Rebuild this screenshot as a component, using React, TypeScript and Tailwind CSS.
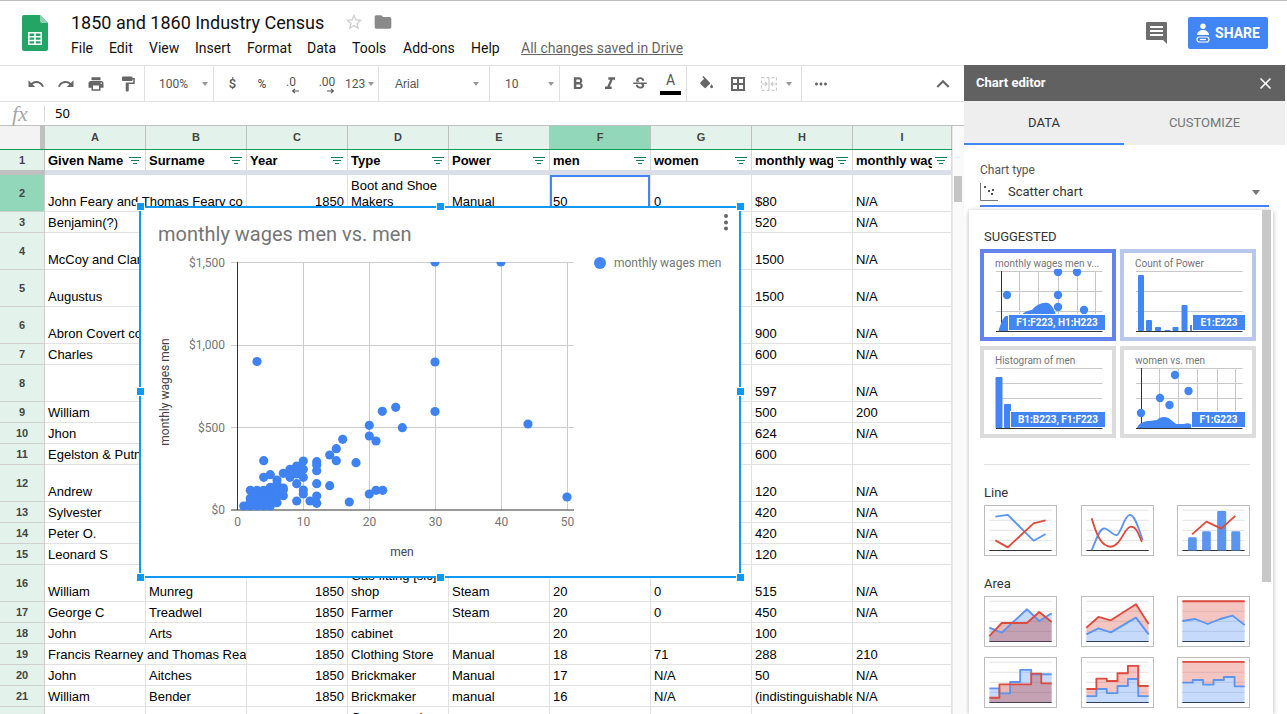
import type { ReactNode } from 'react'
import {
  MdClose,
  MdExpandLess,
  MdFolder,
  MdFormatBold,
  MdFormatItalic,
  MdFormatPaint,
  MdMoreHoriz,
  MdPrint,
  MdRedo,
  MdStarBorder,
  MdStrikethroughS,
  MdUndo,
} from 'react-icons/md'

interface Row {
  n: number
  h: number
  cells: string[]
  wide?: boolean
}

const COLUMNS = ['A', 'B', 'C', 'D', 'E', 'F', 'G', 'H', 'I']
const HEADERS = ['Given Name', 'Surname', 'Year', 'Type', 'Power', 'men', 'women', 'monthly wages men', 'monthly wages women']

const side = (n: number, h: number, name: string, wages: string, women: string): Row => ({
  n,
  h,
  cells: [name, '', '', '', '', '', '', wages, women],
})

const ROWS: Row[] = [
  { n: 2, h: 37, wide: true, cells: ['John Feary and Thomas Feary co', '', '1850', 'Boot and Shoe Makers', 'Manual', '50', '0', '$80', 'N/A'] },
  side(3, 21, 'Benjamin(?)', '520', 'N/A'),
  side(4, 37, 'McCoy and Clark', '1500', 'N/A'),
  side(5, 37, 'Augustus', '1500', 'N/A'),
  side(6, 37, 'Abron Covert co', '900', 'N/A'),
  side(7, 21, 'Charles', '600', 'N/A'),
  side(8, 37, '', '597', 'N/A'),
  side(9, 21, 'William', '500', '200'),
  side(10, 21, 'Jhon', '624', 'N/A'),
  side(11, 21, 'Egelston & Putnam', '600', ''),
  side(12, 37, 'Andrew', '120', 'N/A'),
  side(13, 21, 'Sylvester', '420', 'N/A'),
  side(14, 21, 'Peter O.', '420', 'N/A'),
  side(15, 21, 'Leonard S', '120', 'N/A'),
  { n: 16, h: 37, cells: ['William', 'Munreg', '1850', 'Gas fitting [sic] shop', 'Steam', '20', '0', '515', 'N/A'] },
  { n: 17, h: 21, cells: ['George C', 'Treadwel', '1850', 'Farmer', 'Steam', '20', '0', '450', 'N/A'] },
  { n: 18, h: 21, cells: ['John', 'Arts', '1850', 'cabinet', '', '20', '', '100', ''] },
  { n: 19, h: 21, wide: true, cells: ['Francis Rearney and Thomas Rea', '', '1850', 'Clothing Store', 'Manual', '18', '71', '288', '210'] },
  { n: 20, h: 21, cells: ['John', 'Aitches', '1850', 'Brickmaker', 'Manual', '17', 'N/A', '50', 'N/A'] },
  { n: 21, h: 21, cells: ['William', 'Bender', '1850', 'Brickmaker', 'manual', '16', 'N/A', '(indistinguishable', 'N/A'] },
  { n: 22, h: 37, cells: ['', '', '', 'Grocery and store', '', '', '', '', ''] },
]

const MENU = [
  { label: 'File', w: 'w-[38px]' },
  { label: 'Edit', w: 'w-[40px]' },
  { label: 'View', w: 'w-[46px]' },
  { label: 'Insert', w: 'w-[52px]' },
  { label: 'Format', w: 'w-[60px]' },
  { label: 'Data', w: 'w-[45px]' },
  { label: 'Tools', w: 'w-[51px]' },
  { label: 'Add-ons', w: 'w-[68px]' },
  { label: 'Help', w: 'w-[50px]' },
]

// scatter points, in coordinates read off the page
const SCATTER = [
  [257, 361.5], [435, 262], [501, 262], [435, 362], [435, 411.5], [528, 424], [567, 497],
  [263.7, 460.7], [263.7, 477.3], [270.3, 474.7], [277, 480], [283.3, 473.3], [290, 469.3], [296.7, 466], [303.3, 461],
  [303.3, 469.3], [296.7, 474], [290, 477.3], [303.3, 477.3], [296.7, 483.7], [283.3, 488], [283.3, 495.7], [303.3, 490],
  [303.3, 494], [296.7, 501], [310, 501], [316.7, 496], [316.7, 503.3], [316.7, 483.7], [316.7, 470.7], [316.7, 461.7],
  [316.7, 465], [329.7, 485.7], [329.7, 455], [336.3, 448.7], [336.3, 460.7], [342.7, 439.3], [356, 462.7], [349.3, 502],
  [369.3, 494], [376, 490.3], [382.7, 490.3], [369.3, 436], [376, 441], [369.3, 425.3], [382.3, 411.3], [395.7, 407.3],
  [402.3, 427.7], [250.3, 490.3], [257, 490.3], [263.7, 490.3], [270.3, 487.3], [277, 484], [250.3, 498.3], [257, 496.7],
  [263.7, 495], [270.3, 493.3], [277, 490], [243.7, 506], [250.3, 506], [257, 506], [263.7, 506], [270.3, 506], [277, 502.7],
  [250.3, 501.7], [257, 501.7], [263.7, 501.7], [270.3, 501.7], [257, 493.3], [263.7, 498.3], [270.3, 498.3], [277, 496.7],
  [277, 493.3], [283.3, 490],
]

const filterIcon = (
  <svg width="12" height="8" viewBox="0 0 12 8" className="shrink-0 text-[#0f7f55]">
    <path d="M0 .5h12M2 3.5h8M4 6.5h4" stroke="currentColor" strokeWidth="1" fill="none" />
  </svg>
)

function SheetsLogo() {
  return (
    <svg width="26" height="36" viewBox="0 0 26 36">
      <path d="M2 0h16l8 8v26a2 2 0 0 1-2 2H2a2 2 0 0 1-2-2V2a2 2 0 0 1 2-2z" fill="#23a566" />
      <path d="M18 0l8 8h-6a2 2 0 0 1-2-2z" fill="#8ed1b1" />
      <path
        d="M6 17h14v13H6zm1.500 1.500V21h4.700v-2.500zm6.300 0V21h4.700v-2.500zm-6.300 3.900v2.400h4.700v-2.400zm6.300 0v2.400h4.700v-2.400zm-6.300 3.800v2.300h4.700v-2.300zm6.300 0v2.300h4.700v-2.300z"
        fill="#fff"
        fillRule="evenodd"
      />
    </svg>
  )
}

function Header() {
  return (
    <header className="flex h-[64px] shrink-0 font-[Roboto,sans-serif]">
      <div className="ml-[22px] mt-[14px] w-[49px] shrink-0">
        <SheetsLogo />
      </div>
      <div className="flex-1">
        <div className="mt-[8px] flex h-[26px] items-center">
          <span className="text-[18px] text-[#111]">1850 and 1860 Industry Census</span>
          <MdStarBorder className="ml-[20px] text-[20px] text-[#d0d0d0]" />
          <MdFolder className="ml-[9px] text-[20px] text-[#8a8a8a]" />
        </div>
        <div className="mt-[3px] flex h-[20px] items-center text-[14px] text-[#111]">
          {MENU.map((item) => (
            <span key={item.label} className={item.w}>
              {item.label}
            </span>
          ))}
          <span className="text-[#666] underline">All changes saved in Drive</span>
        </div>
      </div>
      <div className="mt-[16px] flex h-[32px] items-center">
        <svg width="22" height="22" viewBox="0 0 22 22">
          <path d="M1 0h19a1 1 0 0 1 1 1v21l-4-4H1a1 1 0 0 1-1-1V1a1 1 0 0 1 1-1z" fill="#6e6e6e" />
          <path d="M4 5h13M4 9h13M4 13h13" stroke="#fff" strokeWidth="2" />
        </svg>
        <button className="ml-[20px] mr-[19px] flex h-[32px] w-[80px] items-center justify-center gap-[5px] rounded-[2px] bg-[#4285f4] text-[14px] font-bold text-white">
          <svg width="14" height="20" viewBox="0 0 14 20">
            <circle cx="7" cy="3.200" r="2.700" fill="#fff" />
            <path d="M1 12c0-3 3-5 6-5s6 2 6 5z" fill="#fff" />
            <rect x="1" y="14" width="12" height="5" rx="2.500" fill="none" stroke="#fff" strokeWidth="1.200" />
            <path d="M4 16.500h6" stroke="#fff" strokeWidth="1.200" />
          </svg>
          SHARE
        </button>
      </div>
    </header>
  )
}

function Caret() {
  return <span className="h-0 w-0 border-x-[3px] border-t-[4px] border-x-transparent border-t-[#999]" />
}

function ToolIcon({ w, children }: { w: string; children: ReactNode }) {
  return <div className={`flex h-full shrink-0 items-center justify-center ${w}`}>{children}</div>
}

function Sep() {
  return <div className="h-full w-px shrink-0 bg-[#e0e0e0]" />
}

function TinyArrow({ flip }: { flip?: boolean }) {
  return (
    <svg width="8" height="6" viewBox="0 0 8 6" className={flip ? 'ml-[8px] rotate-180' : 'ml-[8px]'}>
      <path d="M8 3H2M4 .8L1.600 3 4 5.200" stroke="#555" strokeWidth="1.100" fill="none" />
    </svg>
  )
}

function Toolbar() {
  const icon = 'text-[18px] text-[#666]'
  return (
    <div className="flex h-[37px] shrink-0 border-y border-[#e0e0e0] pl-[21px] font-[Roboto,sans-serif] text-[12px] text-[#555]">
      <ToolIcon w="w-[30px]"><MdUndo className={icon} /></ToolIcon>
      <ToolIcon w="w-[30px]"><MdRedo className={icon} /></ToolIcon>
      <ToolIcon w="w-[30px]"><MdPrint className={icon} /></ToolIcon>
      <ToolIcon w="w-[33px]"><MdFormatPaint className={icon} /></ToolIcon>
      <Sep />
      <div className="flex w-[68px] shrink-0 items-center pl-[14px]">
        <span className="w-[43px]">100%</span>
        <Caret />
      </div>
      <Sep />
      <ToolIcon w="w-[37px]"><span className="text-[13px] font-medium">$</span></ToolIcon>
      <ToolIcon w="w-[22px]"><span className="font-medium">%</span></ToolIcon>
      <ToolIcon w="w-[36px]">
        <span className="flex flex-col items-center pt-[3px] leading-[11px]">
          .0
          <TinyArrow />
        </span>
      </ToolIcon>
      <ToolIcon w="w-[36px]">
        <span className="flex flex-col items-center pt-[3px] leading-[11px]">
          .00
          <TinyArrow flip />
        </span>
      </ToolIcon>
      <div className="flex w-[33px] shrink-0 items-center gap-[3px]">
        <span>123</span>
        <Caret />
      </div>
      <Sep />
      <div className="flex w-[110px] shrink-0 items-center pl-[16px] font-['Liberation_Sans',sans-serif]">
        <span className="w-[78px]">Arial</span>
        <Caret />
      </div>
      <Sep />
      <div className="flex w-[69px] shrink-0 items-center pl-[15px]">
        <span className="w-[43px]">10</span>
        <Caret />
      </div>
      <Sep />
      <ToolIcon w="w-[35px]"><MdFormatBold className="text-[20px] text-[#666]" /></ToolIcon>
      <ToolIcon w="w-[29px]"><MdFormatItalic className="text-[20px] text-[#666]" /></ToolIcon>
      <ToolIcon w="w-[31px]"><MdStrikethroughS className="text-[18px] text-[#666]" /></ToolIcon>
      <ToolIcon w="w-[31px]">
        <span className="flex flex-col items-center text-[14px] leading-[16px]">
          A
          <span className="mt-[3px] h-[4px] w-[21px] bg-black" />
        </span>
      </ToolIcon>
      <Sep />
      <ToolIcon w="w-[37px]">
        <svg width="15" height="15" viewBox="0 0 21 21">
          <path d="M16.560 8.940L7.620 0 6.210 1.410l2.380 2.380-5.150 5.150c-.59.59-.59 1.540 0 2.120l5.500 5.500c.29.29.68.44 1.060.44s.77-.15 1.060-.44l5.500-5.500c.59-.58.59-1.530 0-2.120z" fill="#666" />
          <path d="M19 11.500s-2 2.170-2 3.500c0 1.100.9 2 2 2s2-.9 2-2c0-1.330-2-3.500-2-3.500z" fill="#666" />
        </svg>
      </ToolIcon>
      <ToolIcon w="w-[27px]">
        <svg width="14" height="14" viewBox="0 0 14 14">
          <path d="M0 0h14v14H0zm2 2v4h4V2zm6 0v4h4V2zM2 8v4h4V8zm6 0v4h4V8z" fill="#666" fillRule="evenodd" />
        </svg>
      </ToolIcon>
      <ToolIcon w="w-[35px]">
        <svg width="16" height="14" viewBox="0 0 16 14">
          <path d="M.5.500h15v13H.5z" fill="none" stroke="#ccc" strokeWidth="1.300" strokeDasharray="3 2" />
          <path d="M1 7h5M4 5l2 2-2 2M15 7h-5M12 5l-2 2 2 2M8 1v12" stroke="#ccc" strokeWidth="1.200" fill="none" />
        </svg>
      </ToolIcon>
      <div className="flex w-[15px] shrink-0 items-center"><Caret /></div>
      <Sep />
      <ToolIcon w="w-[38px]"><MdMoreHoriz className="text-[18px] text-[#666]" /></ToolIcon>
      <div className="flex-1" />
      <ToolIcon w="w-[42px]"><MdExpandLess className="text-[26px] text-[#666]" /></ToolIcon>
    </div>
  )
}

function FormulaBar() {
  return (
    <div className="flex h-[24px] shrink-0 items-center border-b border-[#c0c0c0] bg-white text-[13px] text-black">
      <span className="w-[44px] pl-[12px] font-['Liberation_Serif',serif] text-[22px] italic leading-none text-[#a8a8a8]">fx</span>
      <span className="h-[16px] w-px bg-[#d8d8d8]" />
      <span className="pl-[10px]">50</span>
    </div>
  )
}

function Cell({ text, col, row }: { text: string; col: number; row: Row }) {
  const selected = row.n === 2 && col === 5
  const wrap = col === 3
  const right = col === 2
  const wide = row.wide && col === 0
  const last = col === 8
  return (
    <div
      className={`flex shrink-0 items-end overflow-hidden border-b border-r border-[#e2e2e2] px-[3px] pb-[1px] leading-[16px] ${
        wide ? 'w-[202px]' : last ? 'w-[99px]' : 'w-[101px]'
      } ${wrap ? '' : 'whitespace-nowrap'} ${right ? 'justify-end' : ''} ${
        selected ? 'ring-2 ring-inset ring-[#4285f4]' : ''
      }`}
    >
      {text}
    </div>
  )
}

function SheetGrid() {
  return (
    <div className="relative flex flex-1 overflow-hidden font-['Liberation_Sans',Arial,sans-serif] text-[13px] text-black">
      <div className="w-[952px] shrink-0">
        <div className="flex h-[24px] border-b border-[#0f9d58]">
          <div className="w-[45px] shrink-0 border-r-[5px] border-[#c0c0c0] bg-[#f3f3f3]" />
          {COLUMNS.map((c, i) => (
            <div
              key={c}
              className={`flex shrink-0 items-center justify-center border-r border-[#c0c0c0] text-[11px] font-bold text-[#444] ${
                i === 8 ? 'w-[99px]' : 'w-[101px]'
              } ${c === 'F' ? 'bg-[#93d7bb]' : 'bg-[#e3f3eb]'}`}
            >
              {c}
            </div>
          ))}
        </div>
        <div className="flex h-[20px]">
          <div className="flex w-[45px] shrink-0 items-center justify-center border-r border-[#c0c0c0] bg-[#e3f3eb] text-[11px] font-bold text-[#444]">
            1
          </div>
          {HEADERS.map((h, i) => (
            <div
              key={h}
              className={`flex shrink-0 items-center gap-[3px] border-r border-[#d8d8d8] pl-[3px] pr-[4px] pt-px font-bold ${
                i === 8 ? 'w-[99px]' : 'w-[101px]'
              }`}
            >
              <span className="min-w-0 flex-1 overflow-hidden whitespace-nowrap">{h}</span>
              {filterIcon}
            </div>
          ))}
        </div>
        <div className="flex h-[5px]">
          <div className="w-[45px] bg-[#c0c0c0]" />
          <div className="flex-1 bg-[#d9dee8]" />
        </div>
        {ROWS.map((row) => (
          <div key={row.n} className={`flex ${row.h === 37 ? 'h-[37px]' : 'h-[21px]'}`}>
            <div
              className={`flex w-[45px] shrink-0 items-center justify-center border-b border-r border-[#d0d0d0] text-[11px] font-bold text-[#444] ${
                row.n === 2 ? 'bg-[#93d7bb]' : 'bg-[#e3f3eb]'
              }`}
            >
              {row.n}
            </div>
            {row.cells.map((text, i) =>
              row.wide && i === 1 ? null : <Cell key={i} text={text} col={i} row={row} />
            )}
          </div>
        ))}
      </div>
      <div className="w-[12px] shrink-0 border-l border-[#e8e8e8] bg-[#fafafa] pl-[1px] pt-[50px]">
        <div className="h-[26px] w-[8px] bg-[#c4c4c4]" />
      </div>
      <ChartOverlay />
    </div>
  )
}

function Handle({ pos }: { pos: string }) {
  return <div className={`absolute h-[9px] w-[9px] border border-white bg-[#0f99f5] ${pos}`} />
}

function ChartOverlay() {
  const gridX = [303.5, 369.5, 435.5, 501.5, 567.5]
  const gridY = [262.5, 345.5, 427.5]
  const yLabels: [string, number][] = [['$1,500', 266.5], ['$1,000', 349], ['$500', 431.5], ['$0', 514]]
  const xLabels: [string, number][] = [['0', 237.5], ['10', 303.5], ['20', 369.5], ['30', 435.5], ['40', 501.5], ['50', 567.5]]
  return (
    <div className="absolute left-[139px] top-[80px] h-[372px] w-[602px] border-2 border-[#0f99f5] bg-white font-[Roboto,sans-serif]">
      <svg width="598" height="368" viewBox="141 208 598 368" className="block">
        <defs>
          <clipPath id="plot">
            <rect x="230" y="262" width="345" height="249" />
          </clipPath>
        </defs>
        <text x="158" y="241" fontSize="20" fill="#757575">monthly wages men vs. men</text>
        {gridY.map((y) => (
          <line key={y} x1="231" x2="574" y1={y} y2={y} stroke="#cccccc" />
        ))}
        {gridX.map((x) => (
          <line key={x} x1={x} x2={x} y1="262" y2="510" stroke="#cccccc" />
        ))}
        <line x1="237.500" x2="237.500" y1="262" y2="510" stroke="#333" />
        <line x1="231" x2="574" y1="510" y2="510" stroke="#333" />
        <g clipPath="url(#plot)">
          {SCATTER.map(([x, y], i) => (
            <circle key={i} cx={x} cy={y} r="4.600" fill="#3f82f2" />
          ))}
        </g>
        {yLabels.map(([t, y]) => (
          <text key={t} x="225" y={y} fontSize="12" fill="#757575" textAnchor="end">{t}</text>
        ))}
        {xLabels.map(([t, x]) => (
          <text key={t} x={x} y="526" fontSize="12" fill="#757575" textAnchor="middle">{t}</text>
        ))}
        <text x="402" y="556" fontSize="12" fill="#444" textAnchor="middle">men</text>
        <text x="0" y="0" fontSize="12" fill="#444" textAnchor="middle" transform="translate(169 392) rotate(-90)">
          monthly wages men
        </text>
        <circle cx="600" cy="263" r="6" fill="#4285f4" />
        <text x="614" y="267" fontSize="12" fill="#757575">monthly wages men</text>
        <circle cx="726" cy="216" r="2" fill="#666" />
        <circle cx="726" cy="222.500" r="2" fill="#666" />
        <circle cx="726" cy="228.500" r="2" fill="#666" />
      </svg>
      <Handle pos="-left-[5px] -top-[6px]" />
      <Handle pos="left-[295px] -top-[6px]" />
      <Handle pos="-right-[6px] -top-[6px]" />
      <Handle pos="-left-[5px] top-[179px]" />
      <Handle pos="-right-[6px] top-[179px]" />
      <Handle pos="-left-[5px] -bottom-[6px]" />
      <Handle pos="left-[295px] -bottom-[6px]" />
      <Handle pos="-right-[6px] -bottom-[6px]" />
    </div>
  )
}

function MiniGrid({ rows, cols }: { rows: number[]; cols?: number[] }) {
  return (
    <>
      {rows.map((y) => (
        <line key={y} x1="12" x2="118.500" y1={y} y2={y} stroke="#c8c8c8" />
      ))}
      {(cols ?? []).map((x) => (
        <line key={x} x1={x} x2={x} y1="2" y2="62" stroke="#c8c8c8" />
      ))}
      {cols && <line x1="17.500" x2="17.500" y1="2" y2="62" stroke="#333" />}
      <line x1="12" x2="118.500" y1="62.500" y2="62.500" stroke="#333" />
    </>
  )
}

function SuggestThumb({ title, tag, border, tagW, children }: { title: string; tag: string; border: string; tagW: string; children: ReactNode }) {
  return (
    <div className={`relative h-[92px] w-[136px] shrink-0 border-4 bg-white font-[Roboto,sans-serif] ${border}`}>
      <div className="h-[16px] whitespace-nowrap pl-[11px] pt-[3px] text-[10px] leading-[15px] text-[#757575]">{title}</div>
      <svg width="128" height="68" viewBox="0 0 128 68" className="block">
        {children}
      </svg>
      <div
        className={`absolute bottom-[6px] right-[6px] flex h-[17px] items-center justify-center border border-white bg-[#4285f4] text-[10px] font-bold text-white ${tagW}`}
      >
        {tag}
      </div>
    </div>
  )
}

const BLUE = '#4285f4'

function Dots({ items }: { items: number[][] }) {
  return (
    <>
      {items.map(([x, y]) => (
        <circle key={`${x}-${y}`} cx={x} cy={y} r="4.200" fill={BLUE} />
      ))}
    </>
  )
}

function Bars({ items }: { items: number[][] }) {
  return (
    <>
      {items.map(([x, w, top]) => (
        <rect key={x} x={x} y={top} width={w} height={62 - top} rx="1" fill={BLUE} />
      ))}
    </>
  )
}

const stepPath = (xs: number[], ys: number[]) =>
  ys.map((y, i) => `${i === 0 ? 'M' : 'L'}${xs[i]} ${y} L${xs[i + 1]} ${y}`).join(' ')

const linePath = (pts: number[][]) => pts.map(([x, y], i) => `${i === 0 ? 'M' : 'L'}${x} ${y}`).join(' ')

const LINE_BLUE = '#5b95f0'
const LINE_RED = '#dd4b3e'

function TypeThumb({ children }: { children: ReactNode }) {
  return (
    <div className="h-[51px] w-[73px] shrink-0 border border-[#bdbdbd] bg-white">
      <svg width="71" height="49" viewBox="3 3 212 145" className="block">
        {children}
      </svg>
    </div>
  )
}

function ThumbGrid({ baseline = '#333' }: { baseline?: string }) {
  return (
    <>
      {[15, 45, 75, 105].map((y) => (
        <line key={y} x1="16" x2="202" y1={y} y2={y} stroke="#ddd" strokeWidth="2.500" />
      ))}
      <line x1="16" x2="202" y1="135" y2="135" stroke={baseline} strokeWidth="3" />
    </>
  )
}

function Stroke({ d, color }: { d: string; color: string }) {
  return <path d={d} fill="none" stroke={color} strokeWidth="5.500" strokeLinejoin="round" />
}

function Area({ top, bottom, color, opacity = 1 }: { top: string; bottom: string; color: string; opacity?: number }) {
  return <path d={`${top} ${bottom} Z`} fill={color} fillOpacity={opacity} stroke="none" />
}

function AreaPair({ blue, red, overlap }: { blue: string; red: string; overlap?: boolean }) {
  const base = 'L202 135 L16 135'
  const rev = (d: string) => {
    const nums = d.replace(/[ML]/g, '').trim().split(/\s+/).map(Number)
    const pts: string[] = []
    for (let i = nums.length - 2; i >= 0; i -= 2) pts.push(`L${nums[i]} ${nums[i + 1]}`)
    return pts.join(' ')
  }
  return (
    <>
      <ThumbGrid baseline="#2f3340" />
      {overlap ? (
        <>
          <Area top={blue} bottom={base} color="#4285f4" opacity={0.3} />
          <Area top={red} bottom={base} color="#c0392b" opacity={0.35} />
        </>
      ) : (
        <>
          <Area top={blue} bottom={base} color="#4285f4" opacity={0.3} />
          <Area top={red} bottom={rev(blue)} color="#dd4b3e" opacity={0.32} />
        </>
      )}
      <Stroke d={blue} color={LINE_BLUE} />
      <Stroke d={red} color={LINE_RED} />
    </>
  )
}

function PanelLabel({ children }: { children: ReactNode }) {
  return <div className="pl-[4px] text-[13px] leading-[16px] text-[#333]">{children}</div>
}

function ChartEditor() {
  return (
    <aside className="flex w-[321px] shrink-0 flex-col overflow-hidden bg-white font-[Roboto,sans-serif]">
      <div className="flex h-[36px] shrink-0 items-center justify-between bg-[#616161] pl-[12px] pr-[10px] text-[13px] font-bold text-white">
        Chart editor
        <MdClose className="text-[19px]" />
      </div>
      <div className="flex h-[44px] shrink-0 bg-[#eeeeee] pt-[2px] text-[13px]">
        <div className="flex w-[160px] items-center justify-center border-b-2 border-[#4285f4] text-[#333]">DATA</div>
        <div className="flex flex-1 items-center justify-center pb-[2px] text-[#757575]">CUSTOMIZE</div>
      </div>
      <div className="px-[16px] pt-[17px]">
        <div className="text-[12px] leading-[16px] text-[#555]">Chart type</div>
        <div className="mt-[2px] flex h-[27px] items-center border-b-2 border-[#4285f4] pb-[1px] text-[13px] text-[#333]">
          <svg width="18" height="18" viewBox="0 0 18 18" className="mr-[10px]">
            <path d="M.5 0v17.500H18" fill="none" stroke="#777" />
            <path d="M4 3h2v2H4zM8 7h2v2H8zM12 6h2v2h-2zM11 10h2v2h-2z" fill="#555" />
          </svg>
          <span className="flex-1">Scatter chart</span>
          <span className="mr-[9px] h-0 w-0 border-x-[4px] border-t-[5px] border-x-transparent border-t-[#757575]" />
        </div>
      </div>
      <div className="ml-[5px] mt-[3px] flex w-[304px] flex-1 shadow-[0_1px_5px_rgba(0,0,0,0.3)]">
        <div className="w-[293px] shrink-0 pl-[11px]">
          <div className="mt-[18px] h-[16px] pl-[4px] text-[13px] leading-[18px] text-[#333]">SUGGESTED</div>
          <div className="mt-[5px] flex gap-[4px]">
            <SuggestThumb title="monthly wages men v..." tag="F1:F223, H1:H223" border="border-[#6384ea]" tagW="w-[98px]">
              <MiniGrid rows={[2.500, 22.500, 42.500]} cols={[35.500, 54.500, 74.500, 93.500, 111.500]} />
              <Dots items={[[23, 26], [74, 3], [93, 3], [74, 26], [74, 38], [100, 41]]} />
              <path d="M14.500 62C17 54 19 48 22 47L36 47C40 43 44 41 48 41C52 36 58 33 64 34C68 36 70 40 72 46V62z" fill={BLUE} />
            </SuggestThumb>
            <SuggestThumb title="Count of Power" tag="E1:E223" border="border-[#b8c7ec]" tagW="w-[54px]">
              <MiniGrid rows={[2.500, 22.500, 42.500]} />
              <Bars items={[[14, 6, 6], [22, 6, 51], [31, 6, 58], [40.500, 6, 61], [48.500, 6, 58], [57.500, 6, 36], [66, 4, 56]]} />
            </SuggestThumb>
          </div>
          <div className="mt-[5px] flex gap-[4px]">
            <SuggestThumb title="Histogram of men" tag="B1:B223, F1:F223" border="border-[#dcdcdc]" tagW="w-[96px]">
              <MiniGrid rows={[2.500, 17.500, 32.500]} />
              <Bars items={[[11.500, 7, 11], [20, 7, 38]]} />
            </SuggestThumb>
            <SuggestThumb title="women vs. men" tag="F1:G223" border="border-[#dcdcdc]" tagW="w-[55px]">
              <MiniGrid rows={[2.500, 17.500, 32.500]} cols={[35.500, 54.500, 73.500, 93.500, 111.500]} />
              <Dots items={[[51, 9], [64.500, 25], [36, 32], [45.500, 39], [17, 47]]} />
              <path d="M13 62C15 57 20 55 25 55L33 54C36 50 44 50 47 54L52 58H60C64 56 68 58 70 62z" fill={BLUE} />
            </SuggestThumb>
          </div>
          <div className="ml-[4px] mt-[26px] h-px w-[266px] bg-[#e0e0e0]" />
          <div className="mt-[20px]">
            <PanelLabel>Line</PanelLabel>
          </div>
          <div className="ml-[4px] mt-[4px] flex w-[266px] justify-between">
            <TypeThumb>
              <ThumbGrid />
              <Stroke d={linePath([[34, 34], [71, 29], [148, 106], [184, 86]])} color={LINE_BLUE} />
              <Stroke d={linePath([[34, 105], [71, 126], [148, 54], [184, 45]])} color={LINE_RED} />
            </TypeThumb>
            <TypeThumb>
              <ThumbGrid />
              <Stroke d="M32 134C45 105 55 69 69 69S95 92 107 89S130 29 146 29S175 80 184 104" color={LINE_BLUE} />
              <Stroke d="M32 39C45 85 60 124 89 124S130 64 149 64S172 90 182 109" color={LINE_RED} />
            </TypeThumb>
            <TypeThumb>
              <ThumbGrid />
              <path d="M33 135V100a4 4 0 0 1 4-4h18a4 4 0 0 1 4 4v35zM75 135V82a4 4 0 0 1 4-4h18a4 4 0 0 1 4 4v53zM120 135V21a4 4 0 0 1 4-4h19a4 4 0 0 1 4 4v114zM162 135V82a4 4 0 0 1 4-4h19a4 4 0 0 1 4 4v53z" fill={LINE_BLUE} />
              <Stroke d={linePath([[45, 87], [88, 49], [132, 70], [174, 32]])} color={LINE_RED} />
            </TypeThumb>
          </div>
          <div className="mt-[20px]">
            <PanelLabel>Area</PanelLabel>
          </div>
          <div className="ml-[4px] mt-[4px] flex w-[266px] justify-between">
            <TypeThumb>
              <AreaPair overlap blue={linePath([[16, 94], [53, 109], [128, 39], [165, 74], [202, 51]])} red={linePath([[16, 119], [53, 80], [128, 80], [165, 47], [202, 77]])} />
            </TypeThumb>
            <TypeThumb>
              <AreaPair blue={linePath([[16, 114], [52, 96], [89, 108], [164, 64], [202, 114]])} red={linePath([[16, 94], [52, 62], [89, 72], [164, 24], [202, 83]])} />
            </TypeThumb>
            <TypeThumb>
              <AreaPair blue={linePath([[16, 74], [54, 68], [92, 83], [129, 68], [166, 58], [202, 86]])} red={linePath([[16, 15], [202, 15]])} />
            </TypeThumb>
          </div>
          <div className="ml-[4px] mt-[10px] flex w-[266px] justify-between">
            <TypeThumb>
              <AreaPair overlap blue={stepPath([16, 46, 78, 108, 141, 202], [93, 108, 74, 38, 51])} red={stepPath([16, 46, 141, 171, 202], [121, 81, 49, 78])} />
            </TypeThumb>
            <TypeThumb>
              <AreaPair blue={stepPath([16, 46, 77, 109, 140, 171, 202], [116, 95, 107, 86, 65, 116])} red={stepPath([16, 46, 77, 109, 140, 171, 202], [95, 64, 71, 48, 26, 86])} />
            </TypeThumb>
            <TypeThumb>
              <AreaPair blue={stepPath([16, 47, 78, 109, 140, 172, 202], [76, 68, 82, 68, 59, 87])} red={linePath([[16, 14], [202, 14]])} />
            </TypeThumb>
          </div>
        </div>
        <div className="w-[9px] shrink-0">
          <div className="h-[372px] w-[9px] bg-[#c8c8c8]" />
        </div>
      </div>
    </aside>
  )
}

export default function App() {
  return (
    <div className="flex h-screen w-screen flex-col overflow-hidden border-t border-[#bdbdbd] bg-white">
      <Header />
      <div className="flex min-h-0 flex-1">
        <div className="flex w-[964px] shrink-0 flex-col">
          <Toolbar />
          <FormulaBar />
          <SheetGrid />
        </div>
        <ChartEditor />
      </div>
    </div>
  )
}
